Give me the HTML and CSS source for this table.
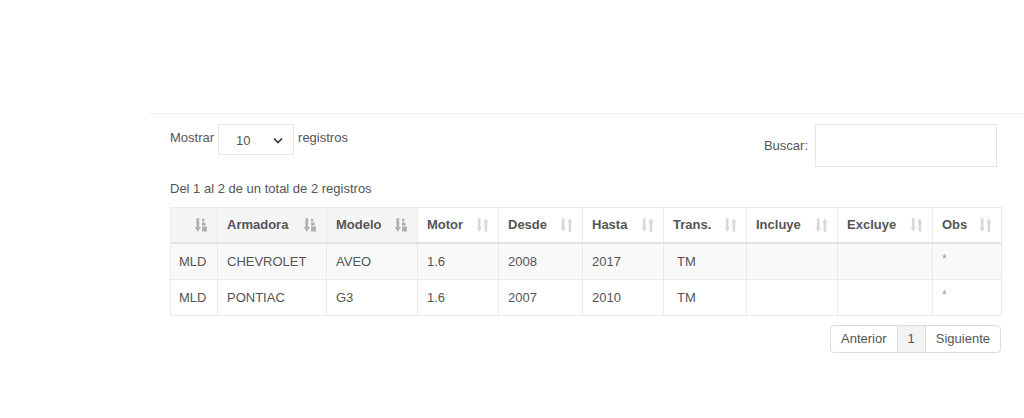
FILE: index.html
```html
<!DOCTYPE html>
<html lang="es">
<head>
<meta charset="utf-8">
<title>Aplicaciones</title>
<link rel="stylesheet" href="styles.css">
</head>
<body>
<svg class="defs" width="0" height="0" aria-hidden="true">
  <symbol id="sort-asc" viewBox="0 0 12 14">
    <rect x="1.4" y="0.3" width="2.8" height="9.7"/>
    <path d="M-0.2 9h6l-3 5z"/>
    <rect x="7" y="0.8" width="2.4" height="2.6"/>
    <rect x="7" y="4.5" width="3.6" height="3"/>
    <rect x="7" y="8.5" width="5" height="5"/>
  </symbol>
  <symbol id="sort-both" viewBox="0 0 11 14">
    <rect x="0.9" y="0.3" width="2.6" height="9.7"/>
    <path d="M-0.4 9.2h5.2l-2.6 4.6z"/>
    <rect x="7.6" y="4" width="2.6" height="9.7"/>
    <path d="M6.3 4.8h5.2l-2.6 -4.6z"/>
  </symbol>
</svg>
<div class="page">
  <hr class="divider">
  <div class="wrap">
    <div class="controls">
      <label class="length">Mostrar
        <span class="select">10
          <svg class="chev" width="10" height="7" viewBox="0 0 10 7"><path d="M1 1.5l4 4 4-4" fill="none" stroke="#333" stroke-width="1.6"/></svg>
        </span>
        registros</label>
      <label class="search">Buscar: <span class="input"></span></label>
    </div>
    <div class="info">Del 1 al 2 de un total de 2 registros</div>
    <table class="grid">
      <colgroup>
        <col style="width:47px"><col style="width:109px"><col style="width:91px"><col style="width:81px"><col style="width:84px"><col style="width:81px"><col style="width:83px"><col style="width:91px"><col style="width:95px"><col style="width:69px">
      </colgroup>
      <thead>
        <tr>
          <th class="sorted first"><svg class="ic sortd"><use href="#sort-asc"/></svg></th>
          <th class="sorted">Armadora<svg class="ic sortd"><use href="#sort-asc"/></svg></th>
          <th class="sorted">Modelo<svg class="ic sortd"><use href="#sort-asc"/></svg></th>
          <th>Motor<svg class="ic both"><use href="#sort-both"/></svg></th>
          <th>Desde<svg class="ic both"><use href="#sort-both"/></svg></th>
          <th>Hasta<svg class="ic both"><use href="#sort-both"/></svg></th>
          <th>Trans.<svg class="ic both"><use href="#sort-both"/></svg></th>
          <th>Incluye<svg class="ic both"><use href="#sort-both"/></svg></th>
          <th>Excluye<svg class="ic both"><use href="#sort-both"/></svg></th>
          <th>Obs<svg class="ic both"><use href="#sort-both"/></svg></th>
        </tr>
      </thead>
      <tbody>
        <tr class="odd">
          <td class="first">MLD</td><td>CHEVROLET</td><td>AVEO</td><td>1.6</td><td>2008</td><td>2017</td><td class="trans">TM</td><td></td><td></td><td class="obs"><span>*</span></td>
        </tr>
        <tr>
          <td class="first">MLD</td><td>PONTIAC</td><td>G3</td><td>1.6</td><td>2007</td><td>2010</td><td class="trans">TM</td><td></td><td></td><td class="obs"><span>*</span></td>
        </tr>
      </tbody>
    </table>
    <div class="pager">
      <span class="pg">Anterior</span><span class="pg cur">1</span><span class="pg">Siguiente</span>
    </div>
  </div>
</div>
</body>
</html>
```

FILE: styles.css
```css
* { box-sizing: border-box; }
html, body { margin: 0; padding: 0; background: #fff; }
body {
  font-family: "Liberation Sans", Arial, sans-serif;
  font-size: 13px;
  color: #555;
}
.defs { position: absolute; width: 0; height: 0; overflow: hidden; }
.page { padding-top: 113px; }
.divider {
  margin: 0 0 0 149px;
  border: 0;
  border-top: 1px solid #eee;
  height: 0;
}
.wrap { width: 831px; margin-left: 170px; }
.controls {
  display: flex;
  justify-content: space-between;
  align-items: flex-start;
  margin-top: 10px;
  padding-right: 4px;
}
.length { display: flex; align-items: flex-start; gap: 4px; line-height: 28px; }
.select {
  display: inline-flex;
  align-items: center;
  justify-content: space-between;
  width: 76px;
  height: 31px;
  border: 1px solid #e5e5e5;
  padding: 2px 10px 0 17px;
  color: #555;
  font-size: 13px;
}
.chev { margin-top: -1px; }
.search { display: flex; align-items: center; gap: 7px; }
.input {
  display: block;
  width: 182px;
  height: 43px;
  border: 1px solid #e5e5e5;
}
.info { margin-top: 14px; line-height: 16px; }
.grid {
  margin-top: 10px;
  border-collapse: collapse;
  table-layout: fixed;
  width: 831px;
}
.grid th, .grid td { border: 1px solid #eaeaea; }
.grid th {
  position: relative;
  height: 35px;
  text-align: left;
  font-weight: bold;
  color: #555;
  padding: 0 10px 0 9px;
  border-bottom: 2px solid #e3e3e3;
  white-space: nowrap;
}
.grid th.sorted { background: #f5f5f5; }
.grid td { height: 37px; padding: 0 10px 0 9px; color: #555; }
.grid tbody tr:last-child td { height: 36px; }
.grid .first { padding-left: 8px; }
.grid td.trans { padding-left: 13px; }
.grid td.obs { color: #99a; }
.grid td.obs span { position: relative; top: -3px; font-size: 12px; }
.grid tr.odd td { background: #f9f9f9; }
.ic {
  position: absolute;
  top: 10px;
}
.ic.sortd { right: 10px; width: 12px; height: 14px; fill: #b0b0b0; }
.ic.both { right: 10px; width: 11px; height: 14px; fill: #d8d8d8; }
.pager {
  display: flex;
  justify-content: flex-end;
  margin-top: 9px;
}
.pg {
  display: block;
  height: 28px;
  line-height: 26px;
  padding: 0 10px;
  border: 1px solid #ddd;
  margin-left: -1px;
  color: #555;
}
.pg:first-child { border-radius: 4px 0 0 4px; }
.pg:last-child { border-radius: 0 4px 4px 0; }
.pg.cur { background: #f3f3f3; }
```
